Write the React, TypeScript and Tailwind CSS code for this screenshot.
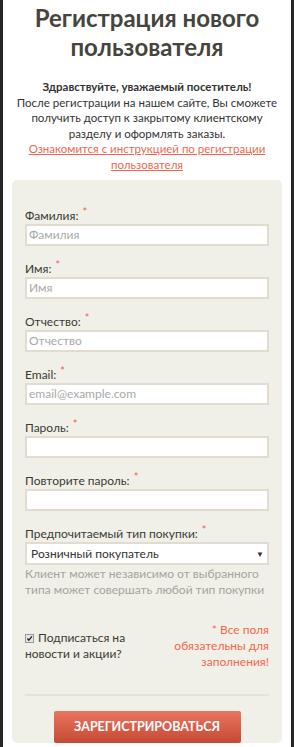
import React from 'react';

const fields = [
  { label: 'Фамилия:', placeholder: 'Фамилия' },
  { label: 'Имя:', placeholder: 'Имя' },
  { label: 'Отчество:', placeholder: 'Отчество' },
  { label: 'Email:', placeholder: 'email@example.com' },
  { label: 'Пароль:', placeholder: '' },
  { label: 'Повторите пароль:', placeholder: '' },
];

const Star: React.FC = () => (
  <span className="relative -top-[4px] ml-[4px] text-[11px] text-[#f0604a]">*</span>
);

const App: React.FC = () => {
  return (
    <div
      className="min-h-[747px] w-[294px] bg-[#262626] px-[3px]"
      style={{ fontFamily: 'Lato, "Liberation Sans", sans-serif' }}
    >
      <div className="min-h-[747px] bg-white px-[9px]">
        {/* Header */}
        <h1 className="pt-[3px] text-center text-[24px] font-bold leading-[29px] text-[#45453d]">
          Регистрация нового пользователя
        </h1>
        <div className="mt-[18px] text-center text-[11.5px] leading-[15.5px] text-[#333]">
          <p className="font-bold">Здравствуйте, уважаемый посетитель!</p>
          <p>После регистрации на нашем сайте, Вы сможете получить доступ к закрытому клиентскому разделу и оформлять заказы.</p>
          <a className="text-[#f0674f] underline">Ознакомится с инструкцией по регистрации пользователя</a>
        </div>

        {/* Form */}
        <div className="mt-[8px] rounded-[5px] bg-[#f1f0e8] px-[13px] pt-[29px]">
          {fields.map((f) => (
            <div key={f.label} className="mb-[16px]">
              <div className="mb-[1px] h-[14px] text-[12px] leading-[14px] text-[#3a3a35]">
                {f.label}
                <Star />
              </div>
              <div className="flex h-[22px] items-center border-2 border-[#e2dbd0] bg-white px-[2px] text-[12px] text-[#a9a9a9]">
                {f.placeholder}
              </div>
            </div>
          ))}

          <div>
            <div className="mb-[1px] h-[14px] text-[12px] leading-[14px] text-[#3a3a35]">
              Предпочитаемый тип покупки:
              <Star />
            </div>
            <div className="flex h-[23px] items-center justify-between border-2 border-[#e2dbd0] bg-white pl-[4px] pr-[3px] text-[12px] text-[#333]">
              <span>Розничный покупатель</span>
              <span className="text-[8px]">▼</span>
            </div>
            <p className="mt-[1px] text-[12px] leading-[16px] text-[#a5a49c]">
              Клиент может независимо от выбранного типа может совершать любой тип покупки
            </p>
          </div>

          <div className="mt-[24px] flex items-start justify-between">
            <div className="w-[115px] pt-[8px] text-[12px] leading-[16px] text-[#3a3a35]">
              <span className="relative top-[1px] mr-[4px] inline-flex h-[9px] w-[9px] items-center justify-center border border-[#999] bg-[#e6e6e6] align-baseline">
                <svg viewBox="0 0 10 10" className="h-[9px] w-[9px]">
                  <path d="M2 5 L4 7.5 L8.5 2" fill="none" stroke="#222" strokeWidth="1.8" />
                </svg>
              </span>
              Подписаться на новости и акции?
            </div>
            <div className="w-[95px] text-right text-[12px] leading-[16px] text-[#f0674f]">
              * Все поля обязательны для заполнения!
            </div>
          </div>

          <div className="mt-[24px] border-t-2 border-[#e4e3da]" />

          <div className="flex justify-center pt-[15px]">
            <button className="h-[32px] w-[187px] rounded-[2px] bg-gradient-to-b from-[#ea7560] to-[#c54933] text-[12.5px] font-bold text-white">
              ЗАРЕГИСТРИРОВАТЬСЯ
            </button>
          </div>
        </div>
      </div>
    </div>
  );
};

export default App;
